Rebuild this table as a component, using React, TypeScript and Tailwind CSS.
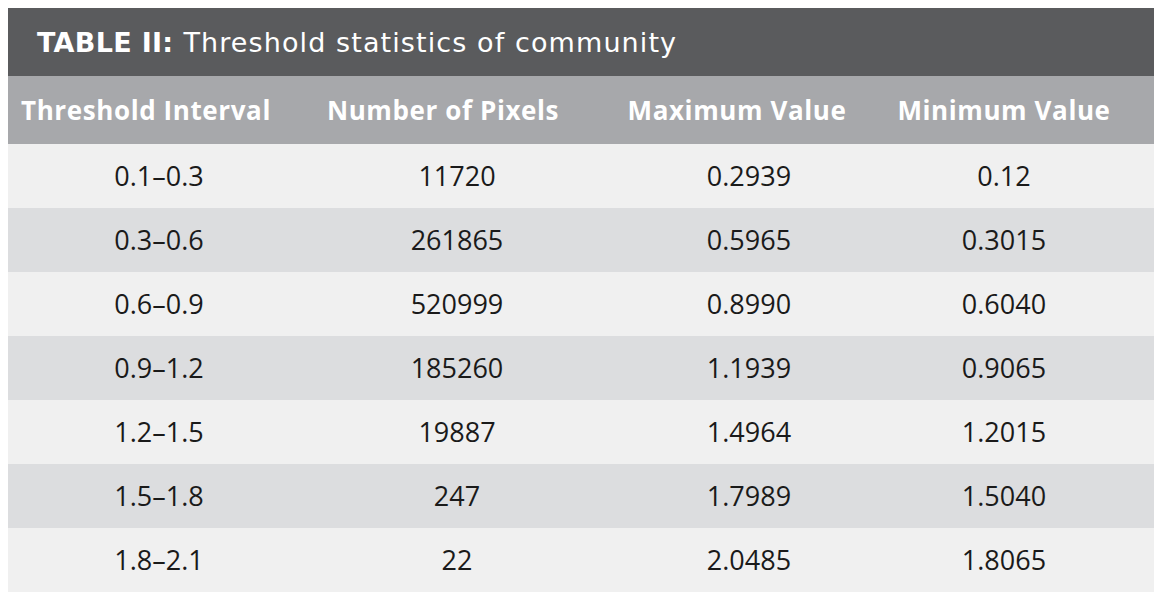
import React from "react";

const rows: [string, string, string, string][] = [
  ["0.1–0.3", "11720", "0.2939", "0.12"],
  ["0.3–0.6", "261865", "0.5965", "0.3015"],
  ["0.6–0.9", "520999", "0.8990", "0.6040"],
  ["0.9–1.2", "185260", "1.1939", "0.9065"],
  ["1.2–1.5", "19887", "1.4964", "1.2015"],
  ["1.5–1.8", "247", "1.7989", "1.5040"],
  ["1.8–2.1", "22", "2.0485", "1.8065"],
];

const headers = ["Threshold Interval", "Number of Pixels", "Maximum Value", "Minimum Value"];

export default function App() {
  return (
    <div className="w-[1168px] h-[608px] bg-white pt-[8px] pl-[8px]">
      <div className="w-[1146px] flex flex-col">
        <div
          className="h-[68px] bg-[#5a5b5d] flex items-center pl-[29px] pt-[3px] text-white text-[27px]"
          style={{ fontFamily: '"DejaVu Sans", sans-serif' }}
        >
          <span className="font-bold mr-[10px] tracking-[0.3px]">TABLE II:</span>
          <span className="font-normal tracking-[1.1px]">Threshold statistics of community</span>
        </div>
        <div
          className="h-[68px] bg-[#a7a8ab] grid grid-cols-[276px_318px_270px_264px] items-center text-white font-bold text-[26px] tracking-[0.6px]"
          style={{ fontFamily: '"Open Sans", sans-serif' }}
        >
          {headers.map((h) => (
            <div key={h} className="text-center whitespace-nowrap">
              {h}
            </div>
          ))}
        </div>
        {rows.map((r, i) => (
          <div
            key={i}
            className={`h-[64px] grid grid-cols-[302px_294px_290px_220px] items-center text-[#1a1a1a] text-[27px] ${
              i % 2 === 0 ? "bg-[#f0f0f0]" : "bg-[#dcdddf]"
            }`}
            style={{ fontFamily: '"Open Sans", sans-serif' }}
          >
            {r.map((c, j) => (
              <div key={j} className="text-center whitespace-nowrap">
                {c}
              </div>
            ))}
          </div>
        ))}
      </div>
    </div>
  );
}
